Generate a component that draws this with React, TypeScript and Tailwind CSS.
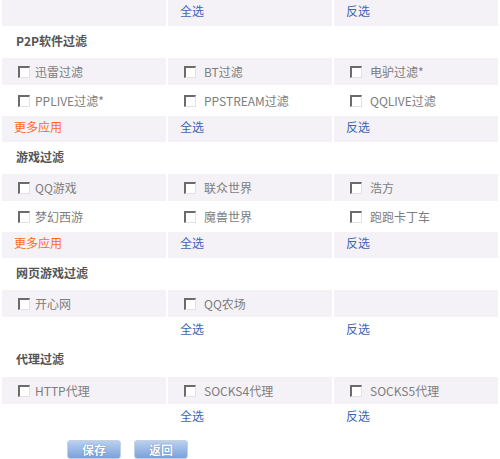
import React from "react";

type Row =
  | { kind: "head"; title: string; h: string }
  | { kind: "checks"; items: (string | null)[]; tint: boolean }
  | { kind: "links"; more: boolean; tint: boolean; h: string };

const rows: Row[] = [
  { kind: "links", more: false, tint: true, h: "h-[26px]" },
  { kind: "head", title: "P2P软件过滤", h: "h-[28px]" },
  { kind: "checks", items: ["迅雷过滤", "BT过滤", "电驴过滤*"], tint: true },
  { kind: "checks", items: ["PPLIVE过滤*", "PPSTREAM过滤", "QQLIVE过滤"], tint: false },
  { kind: "links", more: true, tint: true, h: "h-[26px]" },
  { kind: "head", title: "游戏过滤", h: "h-[28px]" },
  { kind: "checks", items: ["QQ游戏", "联众世界", "浩方"], tint: true },
  { kind: "checks", items: ["梦幻西游", "魔兽世界", "跑跑卡丁车"], tint: false },
  { kind: "links", more: true, tint: true, h: "h-[26px]" },
  { kind: "head", title: "网页游戏过滤", h: "h-[28px]" },
  { kind: "checks", items: ["开心网", "QQ农场", null], tint: true },
  { kind: "links", more: false, tint: false, h: "h-[24px]" },
  { kind: "head", title: "代理过滤", h: "h-[30px]" },
  { kind: "checks", items: ["HTTP代理", "SOCKS4代理", "SOCKS5代理"], tint: true },
  { kind: "links", more: false, tint: false, h: "h-[24px]" },
];

function Box() {
  return (
    <span className="inline-block h-[12px] w-[12px] shrink-0 border-t-2 border-l-2 border-b border-r border-t-[#6b6b6b] border-l-[#6b6b6b] border-b-[#e2e2e2] border-r-[#e2e2e2] bg-white" />
  );
}

function Cell({ tint, h, children, className = "" }: { tint: boolean; h: string; children?: React.ReactNode; className?: string }) {
  return (
    <div className={`flex items-center leading-none ${h} ${tint ? "bg-[#f5f2f7]" : ""} ${className}`}>{children}</div>
  );
}

export default function App() {
  return (
    <div
      className="h-[459px] w-[500px] overflow-hidden bg-white text-[12px]"
      style={{ fontFamily: '"Noto Sans CJK SC", "Liberation Sans", sans-serif' }}
    >
      <div className="grid grid-cols-3 gap-[2px] px-[2px]">
        {rows.map((r, i) => {
          if (r.kind === "head") {
            return (
              <div key={i} className={`col-span-3 flex items-center pb-[3px] pl-[14px] font-bold leading-none text-[#555] ${r.h}`}>
                {r.title}
              </div>
            );
          }
          if (r.kind === "checks") {
            return r.items.map((it, j) => (
              <Cell key={`${i}-${j}`} tint={r.tint} h="h-[27px]" className="pl-[16px] text-[#7d7d7d]">
                {it && (
                  <>
                    <Box />
                    <span className={j === 0 ? "ml-[5px]" : "ml-[8px]"}>{it}</span>
                  </>
                )}
              </Cell>
            ));
          }
          return [
            <Cell key={`${i}-0`} tint={r.tint} h={r.h} className="pb-[4px] pl-[12px] text-[#ff6a1a]">
              {r.more && "更多应用"}
            </Cell>,
            <Cell key={`${i}-1`} tint={r.tint} h={r.h} className="pb-[4px] pl-[12px] text-[#3c66b4]">
              全选
            </Cell>,
            <Cell key={`${i}-2`} tint={r.tint} h={r.h} className="pb-[4px] pl-[12px] text-[#3c66b4]">
              反选
            </Cell>,
          ];
        })}
      </div>
      <div className="mt-[10px] flex gap-[13px] pl-[67px]">
        {["保存", "返回"].map((t) => (
          <button
            key={t}
            className="h-[19px] w-[54px] rounded-[3px] border border-[#c6d0e0] bg-gradient-to-b from-[#b9d0f0] to-[#7ba2db] text-[12px] font-bold leading-[17px] text-white [text-shadow:0_0_1px_#3a5f9a]"
          >
            {t}
          </button>
        ))}
      </div>
    </div>
  );
}
